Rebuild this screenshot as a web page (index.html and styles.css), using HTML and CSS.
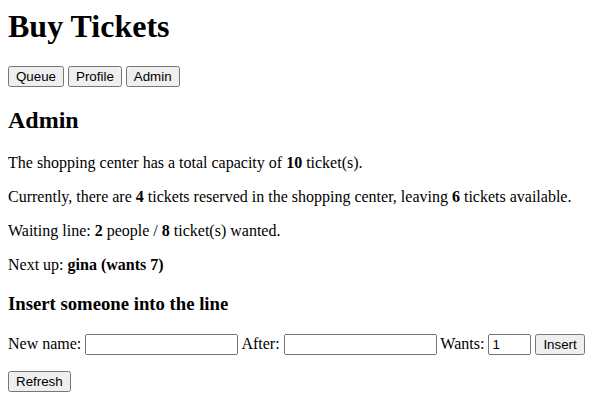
FILE: index.html
```html
<!DOCTYPE html>
<html>

<head>
    <title>Buy Tickets</title>
    <link rel="stylesheet" href="styles.css">
</head>

<body>
    <h1>Buy Tickets</h1>
    <nav class="tabs">
        <button type="button">Queue</button>
        <button type="button">Profile</button>
        <button type="button">Admin</button>
    </nav>
    <div class="admin">
        <h2>Admin</h2>
        <p>The shopping center has a total capacity of <b>10</b> ticket(s).</p>
        <p>Currently, there are <b>4</b> tickets reserved in the shopping center, leaving <b>6</b> tickets available.</p>
        <p>Waiting line: <b>2</b> people / <b>8</b> ticket(s) wanted.</p>
        <p>Next up: <b>gina (wants 7)</b></p>
        <h3>Insert someone into the line</h3>
        <form class="insert-form">
            <label>New name: <input type="text" class="name-input"></label>
            <label>After: <input type="text" class="name-input"></label>
            <label>Wants: <input type="number" class="wants-input" value="1"></label>
            <button type="submit">Insert</button>
        </form>
        <p><button type="button">Refresh</button></p>
    </div>
</body>

</html>
```
FILE: styles.css
```css
body {
    font-family: "Liberation Serif", "Times New Roman", serif;
    margin: 8px;
    color: #000000;
    background-color: #ffffff;
}

h1 {
    margin-top: 0;
}

button,
input {
    font-family: "Liberation Sans", Arial, sans-serif;
    font-size: 13.33px;
}

.tabs {
    display: block;
}

.insert-form {
    margin: 16px 0;
}

.name-input {
    box-sizing: border-box;
    width: 153px;
}

.wants-input {
    box-sizing: border-box;
    width: 43px;
}
```
